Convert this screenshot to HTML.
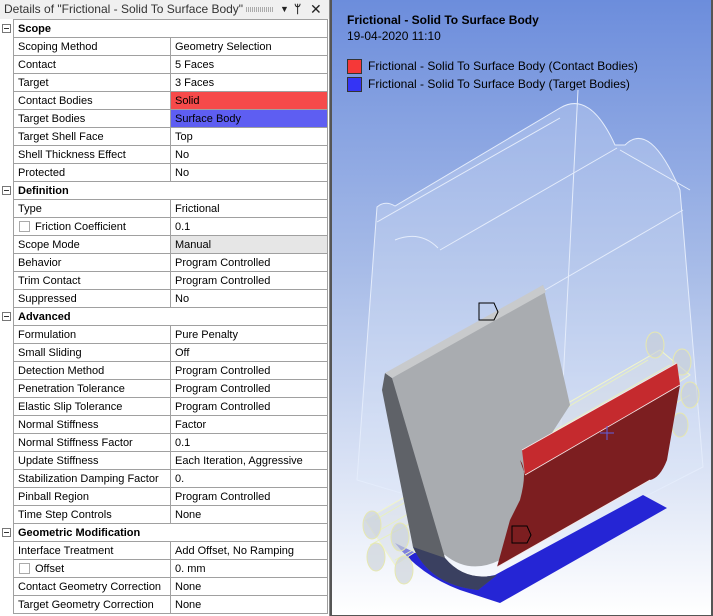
<!DOCTYPE html>
<html><head><style>
*{margin:0;padding:0;box-sizing:border-box}
body{width:713px;height:616px;overflow:hidden;background:#fff;font-family:"Liberation Sans",sans-serif;font-size:11px;color:#000;position:relative}
#panel{position:absolute;left:0;top:0;width:330px;height:616px;background:#fff;border-right:1px solid #888}
#title{height:19px;background:#f0f0f0;color:#333;font-size:12px;line-height:18px;padding-left:4px;white-space:nowrap;position:relative}
#title .grip{position:absolute;left:246px;top:7px;width:28px;height:5px;background:repeating-linear-gradient(90deg,#aaa 0 1px,transparent 1px 2px)}
#title .ic{position:absolute;top:0;font-size:12px;color:#222}
table{border-collapse:collapse;position:absolute;left:13px;top:19px;width:315px}
td{height:18px;border:1px solid #a0a0a0;padding-left:4px;white-space:nowrap;line-height:16px}
td.l{width:157px}
tr.s td{font-weight:bold}
.mb{position:absolute;left:2px;width:9px;height:9px;border:1px solid #777;background:#fff}
.mb:after{content:"";position:absolute;left:1px;top:3px;width:5px;height:1px;background:#333}
.cb{display:inline-block;width:11px;height:11px;border:1px solid #aaa;vertical-align:-2px;margin-right:5px;margin-left:1px}
#view{position:absolute;left:330px;top:0;width:383px;height:616px;background:linear-gradient(#6c8ddc,#a9bde8 45%,#fff);border-left:2px solid #555;border-right:2px solid #555;border-bottom:1px solid #555;overflow:hidden}
</style></head><body>
<div id="panel">
<div id="title">Details of "Frictional - Solid To Surface Body"<div class="grip"></div><span class="ic" style="left:280px;font-size:9px">▼</span><span class="ic" style="left:294px;font-weight:bold">ᛘ</span><span class="ic" style="left:310px;font-size:14px">✕</span></div>
<div class="mb" style="top:24px"></div>
<div class="mb" style="top:186px"></div>
<div class="mb" style="top:312px"></div>
<div class="mb" style="top:528px"></div>
<table>
<tr class="s"><td colspan="2">Scope</td></tr>
<tr><td class="l">Scoping Method</td><td>Geometry Selection</td></tr>
<tr><td class="l">Contact</td><td>5 Faces</td></tr>
<tr><td class="l">Target</td><td>3 Faces</td></tr>
<tr><td class="l">Contact Bodies</td><td style="background:#f64a4a">Solid</td></tr>
<tr><td class="l">Target Bodies</td><td style="background:#5e5ef2">Surface Body</td></tr>
<tr><td class="l">Target Shell Face</td><td>Top</td></tr>
<tr><td class="l">Shell Thickness Effect</td><td>No</td></tr>
<tr><td class="l">Protected</td><td>No</td></tr>
<tr class="s"><td colspan="2">Definition</td></tr>
<tr><td class="l">Type</td><td>Frictional</td></tr>
<tr><td class="l"><span class="cb"></span>Friction Coefficient</td><td>0.1</td></tr>
<tr><td class="l">Scope Mode</td><td style="background:#e6e6e6">Manual</td></tr>
<tr><td class="l">Behavior</td><td>Program Controlled</td></tr>
<tr><td class="l">Trim Contact</td><td>Program Controlled</td></tr>
<tr><td class="l">Suppressed</td><td>No</td></tr>
<tr class="s"><td colspan="2">Advanced</td></tr>
<tr><td class="l">Formulation</td><td>Pure Penalty</td></tr>
<tr><td class="l">Small Sliding</td><td>Off</td></tr>
<tr><td class="l">Detection Method</td><td>Program Controlled</td></tr>
<tr><td class="l">Penetration Tolerance</td><td>Program Controlled</td></tr>
<tr><td class="l">Elastic Slip Tolerance</td><td>Program Controlled</td></tr>
<tr><td class="l">Normal Stiffness</td><td>Factor</td></tr>
<tr><td class="l">Normal Stiffness Factor</td><td>0.1</td></tr>
<tr><td class="l">Update Stiffness</td><td>Each Iteration, Aggressive</td></tr>
<tr><td class="l">Stabilization Damping Factor</td><td>0.</td></tr>
<tr><td class="l">Pinball Region</td><td>Program Controlled</td></tr>
<tr><td class="l">Time Step Controls</td><td>None</td></tr>
<tr class="s"><td colspan="2">Geometric Modification</td></tr>
<tr><td class="l">Interface Treatment</td><td>Add Offset, No Ramping</td></tr>
<tr><td class="l"><span class="cb"></span>Offset</td><td>0. mm</td></tr>
<tr><td class="l">Contact Geometry Correction</td><td>None</td></tr>
<tr><td class="l">Target Geometry Correction</td><td>None</td></tr>
</table>
</div>
<div id="view">
<svg width="383" height="616" viewBox="330 0 383 616" style="position:absolute;left:-2px;top:0">
<!-- translucent sheet -->
<path d="M357,480 L377,207 Q385,200 395,206 L560,108 Q590,90 615,145 L625,145 Q650,120 680,190 L703,467 L560,540 Z" fill="#dfe7f8" fill-opacity="0.3" stroke="#e4ecfb" stroke-width="1"/>
<path d="M377,222 L560,118 M440,250 L617,148 M438,248 Q420,230 395,240 M620,150 L690,190 M545,290 L683,210 M578,90 L555,540" stroke="#e4ecfb" fill="none"/>
<!-- blue strip -->
<path d="M395,543 Q420,575 460,590 L500,603 L667,508 L643,495 L495,575 Q450,585 420,555 Z" fill="#2525d5"/>
<!-- rods -->
<path d="M365,520 L660,350 L690,375 L395,565 Z" fill="#d8dee6" fill-opacity="0.5" stroke="#f2f6c8"/>
<path d="M370,545 L660,390 M380,530 L670,365 M395,560 L690,395 M375,520 L648,360" stroke="#e8f0c0"/>
<g fill="#c8cfd6" fill-opacity="0.6" stroke="#e6e8b0">
<ellipse cx="372" cy="525" rx="9" ry="14"/><ellipse cx="376" cy="557" rx="9" ry="14"/><ellipse cx="404" cy="570" rx="9" ry="14"/><ellipse cx="400" cy="537" rx="9" ry="14"/>
<ellipse cx="655" cy="345" rx="9" ry="13"/><ellipse cx="682" cy="362" rx="9" ry="13"/><ellipse cx="690" cy="395" rx="9" ry="13"/><ellipse cx="680" cy="425" rx="8" ry="12"/>
</g>
<!-- gray solid -->
<path d="M392,378 L543,285 L570,405 L528,470 Q520,540 500,560 Q470,575 445,555 L413,547 Z" fill="#a9acb0"/>
<path d="M385,373 L382,390 L413,547 Q430,585 478,590 L497,575 Q465,582 445,558 L392,378 Z" fill="#5f6268"/>
<path d="M413,547 Q430,585 478,590 L497,575 Q465,582 445,558 Z" fill="#3a4060"/>
<path d="M385,373 L543,285 L546,292 L392,378 Z" fill="#c8cacc"/>
<!-- red -->
<path d="M522,450 L677,363 L680,385 L525,475 Z" fill="#c52a2e"/>
<path d="M525,475 L680,385 L667,460 Q660,478 650,480 L497,567 L510,520 L520,500 Q528,470 520,460 Z" fill="#7c1e20"/>
<path d="M522,450 L677,363 M525,475 L680,385 M497,567 L650,480" stroke="#f4e8e8" stroke-width="0.8"/>
<path d="M479,303 L494,303 L498,312 L494,320 L479,320 Z M512,526 L527,526 L531,535 L527,543 L512,543 Z" fill="none" stroke="#000"/>
<path d="M607,426 v14 M600,433 h14" stroke="#6060e0"/>
</svg>
<div style="position:absolute;left:15px;top:13px;font-weight:bold;font-size:12px">Frictional - Solid To Surface Body</div>
<div style="position:absolute;left:15px;top:29px;font-size:12px">19-04-2020 11:10</div>
<div style="position:absolute;left:15px;top:59px;width:15px;height:15px;background:#f53838;border:1px solid #333"></div>
<div style="position:absolute;left:36px;top:59px;font-size:12px">Frictional - Solid To Surface Body (Contact Bodies)</div>
<div style="position:absolute;left:15px;top:77px;width:15px;height:15px;background:#3434f5;border:1px solid #333"></div>
<div style="position:absolute;left:36px;top:77px;font-size:12px">Frictional - Solid To Surface Body (Target Bodies)</div>
</div>
</body></html>
